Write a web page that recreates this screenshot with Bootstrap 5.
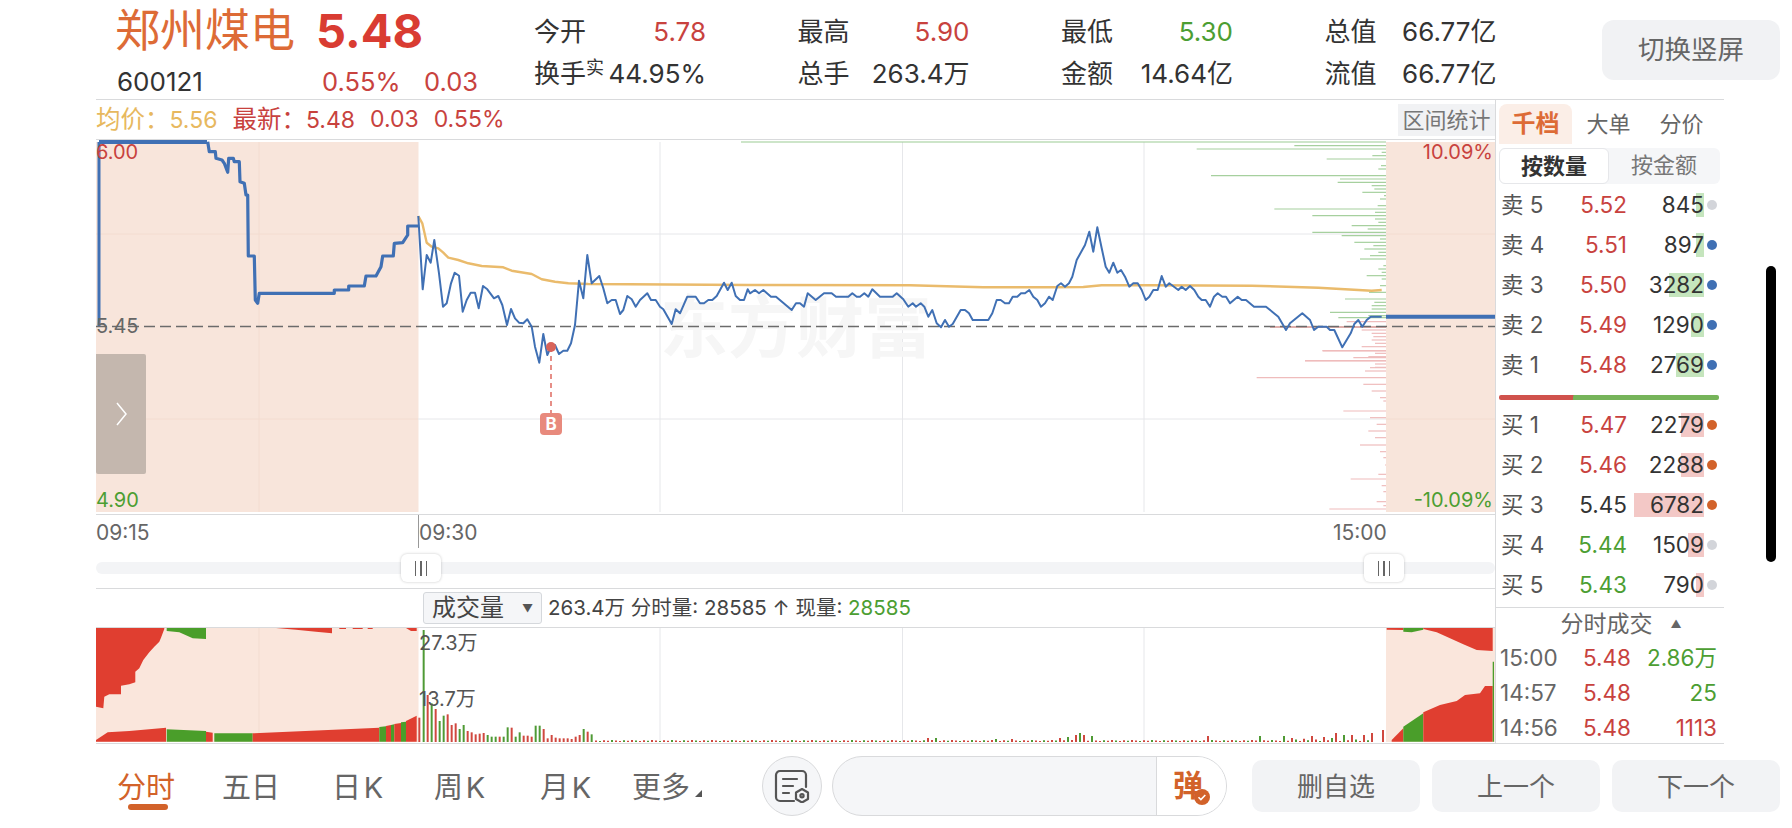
<!DOCTYPE html>
<html lang="zh-CN">
  <head>
    <meta charset="UTF-8" />
    <meta name="viewport" content="width=device-width, initial-scale=1.0" />
    <title>郑州煤电 600121</title>
    <link
      rel="stylesheet"
      href="https://cdn.jsdelivr.net/npm/bootstrap@5.3.3/dist/css/bootstrap.min.css"
    />
    <style>
      html,
      body {
        width: 1792px;
        height: 828px;
        overflow: hidden;
        background: #fff;
      }
      body {
        font-family: Inter, "Noto Sans CJK SC", sans-serif;
        color: #333;
        font-size: 22.5px;
      }
      .up { color: #c8423e; }
      .down { color: #4c9e32; }
      .muted { color: #666; }

      /* 顶部行情 */
      .top-head { height: 99px; padding-left: 115px; }
      .name-box { width: 419px; padding-top: 6px; }
      .stock-name { width: 201px; font-size: 45px; line-height: 50px; color: #dd6b36; }
      .stock-price { font-size: 47px; line-height: 50px; font-weight: 700; color: #d93c32; }
      .code-row { margin: 9px 0 0 2px; font-size: 25.5px; line-height: 34px; color: #333; }
      .code-row .code-no { width: 205px; font-size: 26px; }
      .code-row .code-pct { width: 102px; }
      .stat-grid {
        display: grid;
        grid-template-columns: repeat(4, 172px);
        column-gap: 91.5px;
        padding-top: 12px;
        font-size: 26px;
        line-height: 39px;
      }
      .stat-sup { font-size: 18px; position: relative; top: -9px; }
      .switch-btn {
        position: absolute;
        left: 1602px;
        top: 20px;
        width: 178px;
        height: 60px;
        background: #f1f2f4;
        border: 0;
        border-radius: 12px;
        color: #666;
        font-size: 26.5px;
      }

      /* 主体 */
      .main-box {
        margin-left: 96px;
        width: 1628px;
        height: 645px;
        border-top: 1px solid #d9dadc;
        border-bottom: 1px solid #d9dadc;
        overflow: hidden;
      }
      .left-col { width: 1399px; }
      .right-col { width: 229px; border-left: 1px solid #d9dadc; }
      .stat-bar { height: 40px; border-bottom: 1px solid #d9dadc; font-size: 23px; line-height: 39px; }
      .stat-items { gap: 15px; }
      .stat-items em { font-style: normal; font-size: 24.5px; }
      .avg { color: #e7b85e; }
      .range-btn {
        width: 97px;
        height: 32px;
        margin-top: 4px;
        background: #f1f2f4;
        color: #777;
        line-height: 32px;
        text-align: center;
        font-size: 22px;
      }
      .chart-svg { display: block; }
      .chart-svg text { font-family: Inter, "Noto Sans CJK SC", sans-serif; }
      .axis-box { border-top: 1px solid #d9dadc; border-bottom: 1px solid #d9dadc; height: 75px; }
      .axis-row { height: 33px; font-size: 21px; line-height: 36px; color: #666; }
      .axis-a { width: 322px; }
      .axis-b { border-left: 1px solid #999; }
      .axis-c { width: 162px; }
      .slider-track { margin-top: 14px; height: 12px; background: #f3f4f6; border-radius: 6px; }
      .slider-hand {
        position: absolute;
        top: -8px;
        width: 40px;
        height: 28px;
        background: #fff;
        border-radius: 6px;
        box-shadow: 0 0 3px rgba(0, 0, 0, 0.22);
        gap: 4px;
      }
      .slider-hand i { display: block; width: 1.5px; height: 15px; background: #666; }
      .hand-a { left: 305px; }
      .hand-b { left: 1268px; }
      .vol-head { height: 39px; border-bottom: 1px solid #d9dadc; padding-left: 327px; font-size: 20.5px; color: #444; }
      .vol-select {
        width: 119px;
        height: 32px;
        margin-right: 6px;
        padding: 0 8px;
        background: #f5f6f8;
        border: 1px solid #d5d8dc;
        border-radius: 3px;
        font-size: 24px;
        color: #444;
      }
      .vol-select b { font-size: 11px; font-weight: 400; color: #555; }

      /* 右侧盘口 */
      .tab-row { padding: 4px 0 0 3px; height: 44px; font-size: 22px; color: #666; }
      .tab-item { width: 73px; height: 40px; line-height: 40px; text-align: center; }
      .tab-on { background: #fbeee7; color: #dd6b36; font-weight: 700; font-size: 24px; border-radius: 8px 8px 0 0; }
      .seg-box { margin: 4px 0 0 3px; width: 221px; height: 36px; background: #f5f6f8; border-radius: 6px; font-size: 22px; color: #777; }
      .seg-item { width: 110px; line-height: 34px; text-align: center; }
      .seg-on { background: #fff; color: #333; font-weight: 700; border: 1px solid #e6e7ea; border-radius: 6px; }
      #sell-list { padding-top: 1px; }
      .order-row { height: 40px; line-height: 40px; }
      .o-label { width: 64px; padding-left: 5px; color: #555; white-space: pre; }
      .o-price { width: 67px; text-align: right; }
      .o-qty { width: 77px; text-align: right; color: #333; }
      .o-fill { position: absolute; right: 0; top: 8px; height: 24px; }
      .fill-sell { background: #c5e5bd; }
      .fill-buy { background: #f3c8c6; }
      .o-text { position: relative; }
      .o-dot { width: 10px; height: 10px; border-radius: 50%; margin-left: 3px; }
      .power-bar {
        margin: 10px 5px 5px 3px;
        height: 5px;
        border-radius: 2px;
        background: linear-gradient(100deg, #d0524c 33.6%, #76b45a 33.9%);
      }
      .trade-title { margin-top: 2px; border-top: 1px solid #d9dadc; height: 33px; font-size: 23px; line-height: 32px; color: #666; padding-left: 22px; }
      .trade-title b { font-size: 11px; font-weight: 400; margin-left: 18px; }
      .trade-row { height: 35px; line-height: 35px; padding-left: 4px; }
      .t-time { width: 70px; color: #666; }
      .t-price { width: 61px; text-align: right; }
      .t-vol { width: 86px; text-align: right; }

      /* 底部 */
      .foot-bar { height: 84px; padding-left: 117px; }
      .foot-tab { font-size: 29px; color: #666; height: 44px; line-height: 48px; position: relative; white-space: pre; }
      .ft-1 { width: 105px; color: #d2622a; }
      .ft-2 { width: 110px; }
      .ft-3 { width: 102px; }
      .ft-4 { width: 106px; }
      .ft-5 { width: 92px; }
      .ft-6 { width: 130px; }
      .ft-line { position: absolute; left: 11px; top: 40px; width: 40px; height: 6px; border-radius: 3px; background: #d2622a; }
      .ft-tri { position: absolute; left: 63px; top: 26px; width: 0; height: 0; border-left: 7px solid transparent; border-bottom: 7px solid #555; }
      .round-btn { width: 60px; height: 60px; margin-right: 10px; background: #f5f6f8; border: 1px solid #d9dadc; border-radius: 50%; }
      .input-pill { width: 395px; height: 60px; margin-right: 25px; background: #f5f6f8; border: 1px solid #d9dadc; border-radius: 30px; overflow: hidden; }
      .pill-send {
        position: relative;
        width: 70px;
        height: 100%;
        background: #fff;
        border-left: 1px solid #d9dadc;
        color: #d2622a;
        font-size: 30px;
        font-weight: 700;
        line-height: 56px;
        padding-left: 16px;
      }
      .send-ok { position: absolute; left: 37px; top: 32px; }
      .foot-btn {
        width: 168px;
        height: 52px;
        margin-right: 12px;
        padding: 0;
        background: #f2f3f5;
        border: 0;
        border-radius: 10px;
        color: #666;
        font-size: 26px;
      }
      .side-bar { position: fixed; left: 1766px; top: 266px; width: 10px; height: 296px; background: #000; border-radius: 5px; }
    </style>
  </head>
  <body>
    <div class="top-head d-flex position-relative">
      <div class="name-box">
        <div class="d-flex">
          <div class="stock-name">郑州煤电</div>
          <div class="stock-price">5.48</div>
        </div>
        <div class="code-row d-flex">
          <span class="code-no">600121</span>
          <span class="code-pct up">0.55%</span>
          <span class="up">0.03</span>
        </div>
      </div>
      <div class="stat-grid">
        <div class="d-flex justify-content-between"><span>今开</span><span class="up">5.78</span></div>
        <div class="d-flex justify-content-between"><span>最高</span><span class="up">5.90</span></div>
        <div class="d-flex justify-content-between"><span>最低</span><span class="down">5.30</span></div>
        <div class="d-flex justify-content-between"><span>总值</span><span>66.77亿</span></div>
        <div class="d-flex justify-content-between"><span>换手<span class="stat-sup">实</span></span><span>44.95%</span></div>
        <div class="d-flex justify-content-between"><span>总手</span><span>263.4万</span></div>
        <div class="d-flex justify-content-between"><span>金额</span><span>14.64亿</span></div>
        <div class="d-flex justify-content-between"><span>流值</span><span>66.77亿</span></div>
      </div>
      <button class="switch-btn">切换竖屏</button>
    </div>

    <div class="main-box d-flex">
      <div class="left-col">
        <div class="stat-bar d-flex justify-content-between">
          <div class="stat-items d-flex">
            <span class="avg"><em>均价：</em>5.56</span>
            <span class="up"><em>最新：</em>5.48</span>
            <span class="up">0.03</span>
            <span class="up">0.55%</span>
          </div>
          <div class="range-btn">区间统计</div>
        </div>
        <svg id="price-chart" class="chart-svg" width="1399" height="374" viewBox="96 140 1399 374"></svg>
        <div class="axis-box">
          <div class="axis-row d-flex">
            <div class="axis-a">09:15</div>
            <div class="axis-b flex-grow-1">09:30</div>
            <div class="axis-c">15:00</div>
          </div>
          <div class="slider-track position-relative">
            <div class="slider-hand hand-a d-flex justify-content-center align-items-center"><i></i><i></i><i></i></div>
            <div class="slider-hand hand-b d-flex justify-content-center align-items-center"><i></i><i></i><i></i></div>
          </div>
        </div>
        <div class="vol-head d-flex align-items-center">
          <div class="vol-select d-flex justify-content-between align-items-center"><span>成交量</span><b>▼</b></div>
          <span>263.4万 分时量: 28585 ↑ 现量: <span class="down">28585</span></span>
        </div>
        <svg id="vol-chart" class="chart-svg" width="1399" height="115" viewBox="96 628 1399 115"></svg>
      </div>

      <div class="right-col">
        <div class="tab-row d-flex">
          <div class="tab-item tab-on">千档</div>
          <div class="tab-item">大单</div>
          <div class="tab-item">分价</div>
        </div>
        <div class="seg-box d-flex">
          <div class="seg-item seg-on">按数量</div>
          <div class="seg-item">按金额</div>
        </div>
        <div id="sell-list"></div>
        <div class="power-bar"></div>
        <div id="buy-list"></div>
        <div class="trade-title d-flex justify-content-center align-items-center">
          <span>分时成交</span><b>▲</b>
        </div>
        <div id="trade-list"></div>
      </div>
    </div>

    <div class="foot-bar d-flex align-items-center">
      <div class="foot-tab ft-1">分时<span class="ft-line"></span></div>
      <div class="foot-tab ft-2">五日</div>
      <div class="foot-tab ft-3">日&#8202;K</div>
      <div class="foot-tab ft-4">周&#8202;K</div>
      <div class="foot-tab ft-5">月&#8202;K</div>
      <div class="foot-tab ft-6">更多<span class="ft-tri"></span></div>
      <div class="round-btn d-flex align-items-center justify-content-center flex-shrink-0">
        <svg width="36" height="34" viewBox="0 0 36 34" fill="none" stroke="#555" stroke-width="2.2" stroke-linecap="round" stroke-linejoin="round">
          <path d="M20 32H6a4 4 0 0 1-4-4V6a4 4 0 0 1 4-4h22a4 4 0 0 1 4 4v12" />
          <path d="M9 10h14M9 17h10M9 24h6" />
          <path d="M28 20l6 3.5v6.5l-6 3.5-6-3.5v-6.5z" />
          <circle cx="28" cy="26.8" r="1.6" />
        </svg>
      </div>
      <div class="input-pill d-flex justify-content-end flex-shrink-0">
        <div class="pill-send">
          弹
          <svg class="send-ok" width="16" height="16" viewBox="0 0 16 16">
            <circle cx="8" cy="8" r="8" fill="#d2622a" />
            <path d="M4.5 8.2l2.4 2.4 4.4-4.6" fill="none" stroke="#fff" stroke-width="1.6" />
          </svg>
        </div>
      </div>
      <button class="btn foot-btn flex-shrink-0">删自选</button>
      <button class="btn foot-btn flex-shrink-0">上一个</button>
      <button class="btn foot-btn flex-shrink-0">下一个</button>
    </div>

    <div class="side-bar"></div>

    <script>
      // 把放大图上读到的坐标换回页面坐标
      const at = (ox, oy, pts) => pts.map(([x, y]) => [ox + x / 3, oy + y / 3]);
      const str = (pts) => pts.map(([x, y]) => x.toFixed(1) + "," + y.toFixed(1)).join(" ");
      const poly = (pts, color) => `<polygon points="${str(pts)}" fill="${color}" />`;
      const line = (x1, y1, x2, y2, color, w, extra = "") =>
        `<line x1="${x1}" y1="${y1}" x2="${x2}" y2="${y2}" stroke="${color}" stroke-width="${w}" ${extra} />`;
      const path = (pts, color, w) =>
        `<polyline points="${str(pts)}" fill="none" stroke="${color}" stroke-width="${w}" stroke-linejoin="round" />`;
      const label = (x, y, text, color, anchor = "start") =>
        `<text x="${x}" y="${y}" font-size="20" fill="${color}" text-anchor="${anchor}">${text}</text>`;

      const BLUE = "#4070b4";
      const SHADE = "#f8e5db";
      const SHADE_VOL = "#fae6dc";
      const GRID = "#e6e7ea";

      // 盘前集合竞价
      const preLine = at(96, 140, [
        [335, 5], [340, 35], [358, 35], [360, 55], [378, 60], [385, 70], [395, 97], [398, 55], [412, 55],
        [415, 65], [430, 65], [432, 125], [445, 130], [450, 165], [455, 165], [457, 348], [475, 348],
        [478, 480], [485, 490], [490, 460], [715, 460], [715, 450], [758, 450], [758, 438], [805, 438],
        [810, 408], [840, 408], [855, 380], [860, 348], [892, 348], [895, 310], [920, 308], [935, 285],
        [935, 258], [968, 258],
      ]);

      // 分时线
      const dayLine = [
        ...at(415, 210, [
          [10, 18], [23, 238], [35, 135], [47, 158], [58, 90], [72, 190], [84, 290], [95, 280], [108, 220],
          [119, 188], [132, 197], [143, 305], [155, 270], [167, 248], [180, 248], [191, 295], [204, 228],
          [217, 238], [237, 265], [250, 258], [262, 285], [276, 345], [288, 297], [300, 325], [312, 338],
          [325, 340], [337, 328], [350, 350], [360, 410], [373, 458], [385, 372], [397, 435], [408, 410],
          [420, 405], [432, 432], [445, 422], [457, 422], [468, 400], [480, 345], [492, 212], [505, 265],
          [517, 135], [530, 220], [553, 198], [565, 235], [577, 280], [590, 270], [602, 270], [615, 312],
          [625, 300], [637, 258], [650, 268], [662, 290], [675, 270], [697, 250], [708, 270], [722, 270],
          [735, 290], [745, 298], [770, 342], [782, 298], [795, 310], [817, 260], [842, 260], [855, 280],
          [867, 280], [880, 270], [892, 270], [905, 258], [927, 218], [938, 240], [950, 218], [962, 258],
          [975, 270], [987, 270], [998, 238],
        ]),
        ...at(750, 210, [
          [0, 250], [15, 240], [27, 250], [40, 240], [63, 260], [78, 260], [125, 300], [138, 280], [150, 280],
          [162, 290], [173, 250], [197, 270], [222, 250], [245, 250], [258, 260], [295, 260], [307, 250],
          [320, 260], [330, 260], [343, 250], [355, 260], [367, 238], [390, 260], [428, 260], [440, 250],
          [460, 268], [475, 290], [488, 280], [498, 290], [512, 280], [523, 290], [535, 320], [547, 300],
          [560, 340], [573, 352], [585, 330], [597, 350], [608, 342], [632, 300], [645, 300], [657, 310],
          [668, 330], [715, 330], [727, 310], [740, 270], [752, 270], [765, 280], [777, 280], [788, 260],
          [802, 260], [813, 250], [825, 250], [838, 240], [850, 260], [862, 270], [873, 290], [885, 280],
          [897, 260], [908, 270], [922, 228], [933, 220], [945, 230], [957, 220], [967, 200], [980, 150],
          [1005, 105],
        ]),
        ...at(1085, 140, [
          [13, 275], [25, 335], [37, 262], [50, 325], [62, 380], [73, 398], [85, 368], [97, 398], [108, 390],
          [120, 410], [133, 440], [145, 430], [158, 430], [170, 450], [182, 480], [193, 470], [205, 450],
          [218, 450], [230, 408], [242, 440], [253, 430], [280, 450], [290, 440], [302, 450], [315, 438],
          [328, 450], [340, 470], [350, 480], [362, 480], [375, 500], [387, 470], [398, 460], [412, 470],
          [423, 470], [435, 490], [458, 470], [470, 480], [483, 480], [507, 500], [543, 500], [580, 530],
          [603, 570], [615, 550], [652, 520], [675, 540], [687, 570], [700, 560], [725, 560], [735, 570],
          [748, 570], [772, 622], [797, 580], [808, 552], [820, 540], [832, 560], [845, 540], [857, 530],
          [890, 530],
        ]),
      ];

      // 均价线
      const avgLine = [
        ...at(415, 210, [
          [10, 18], [22, 40], [35, 98], [50, 110], [70, 115], [85, 128], [100, 143], [130, 150], [160, 160],
          [200, 168], [265, 172], [290, 182], [350, 192], [380, 208], [420, 215], [460, 220], [520, 222], [1000, 225],
        ]),
        ...at(750, 210, [[480, 226], [700, 232], [900, 232], [1000, 231]]),
        ...at(1085, 140, [[50, 436], [200, 436], [500, 437], [700, 443], [860, 452], [890, 450]]),
      ];

      // 右侧成交分布: [y, 左端 x]
      const greenBars = [
        [17, 628], [27, 335], [37, 890], [47, 862], [57, 725], [77, 888], [87, 880], [107, 378], [117, 765],
        [127, 758], [137, 860], [147, 868], [157, 832], [167, 897], [177, 885], [197, 878], [207, 568],
        [217, 870], [227, 682], [237, 870], [247, 880], [257, 800], [267, 848], [277, 682], [287, 770],
        [297, 885], [307, 808], [317, 865], [327, 838], [337, 880], [347, 855], [357, 825], [377, 895],
        [387, 880], [397, 890], [407, 845], [417, 890], [437, 885], [457, 852], [477, 780], [487, 868],
        [497, 860], [507, 860], [517, 735], [527, 850], [533, 760],
      ];
      const redTop = [
        [545, 785], [570, 830], [580, 860], [590, 865], [600, 860], [610, 870], [620, 830], [632, 712],
        [640, 870], [650, 850], [662, 660], [672, 870], [682, 870],
      ];
      const redLow = [
        [378, 98], [398, 190], [408, 45], [428, 240], [438, 225], [458, -100], [478, 220], [498, 245],
        [518, 270], [528, 280], [558, 160], [578, 240], [598, 260], [618, 235], [638, 255], [660, 210],
        [680, 270], [698, 280], [720, 285], [748, 265], [762, 182], [782, 275], [800, 280], [830, 260],
        [842, 280], [852, 118],
      ];

      let price = "";
      price += `<rect x="96" y="142" width="322.5" height="370" fill="${SHADE}" />`;
      price += `<rect x="1386" y="142" width="109" height="370" fill="${SHADE}" />`;
      [660, 902.5, 1144].forEach((x) => (price += line(x, 142, x, 512, GRID, 1)));
      price += line(259, 142, 259, 512, "#f3dcd0", 1);
      [234, 419].forEach((y) => {
        price += line(418, y, 1386, y, GRID, 1);
        price += line(96, y, 418, y, "#f3dcd0", 1);
        price += line(1386, y, 1495, y, "#f3dcd0", 1);
      });
      price += `<text x="660" y="352" font-size="68" font-weight="700" fill="#f6f6f6">东方财富</text>`;
      price += line(741, 142, 1386, 142, "#9ccc94", 1.2);
      greenBars.forEach(([y, x]) => (price += line(1085 + x / 3, 140 + y / 3, 1386, 140 + y / 3, "#a6d09e", 1.2)));
      redTop.forEach(([y, x]) => (price += line(1085 + x / 3, 140 + y / 3, 1386, 140 + y / 3, "#efbcbc", 1.2)));
      redLow.forEach(([y, x]) => (price += line(1290 + x / 3, 225 + y / 3, 1386, 225 + y / 3, "#efbcbc", 1.2)));
      price += line(1270, 327, 1386, 327, "#c0605a", 1.2);
      price += line(96, 326.5, 1495, 326.5, "#6b6b6b", 1.4, 'stroke-dasharray="11 5"');
      price += path(avgLine, "#eabb6c", 2.4);
      price += line(99, 142, 99, 326, BLUE, 3);
      price += line(99, 142, 207, 142, BLUE, 4);
      price += path(preLine, BLUE, 3.2);
      price += path(dayLine, BLUE, 2);
      price += line(1386, 316.7, 1495, 316.7, BLUE, 4);
      // B 点买入标记
      price += line(551, 347, 551, 413, "#e0736a", 1.6, 'stroke-dasharray="5 4"');
      price += `<circle cx="551" cy="347" r="5" fill="#d9645a" />`;
      price += `<rect x="540" y="413" width="22" height="22" rx="4" fill="#e88a7d" />`;
      price += `<text x="551" y="430" font-size="17" font-weight="700" fill="#fff" text-anchor="middle">B</text>`;
      // 左侧收起把手
      price += `<path d="M96 354h48a2 2 0 0 1 2 2v116a2 2 0 0 1-2 2H98a2 2 0 0 1-2-2z" fill="#c4b7ae" />`;
      price += `<path d="M117 403l9 11-9 11" fill="none" stroke="#fff" stroke-width="1.5" />`;
      // 坐标文字
      price += label(96, 159, "6.00", "#c8423e");
      price += label(96, 333, "5.45", "#666");
      price += label(96, 507, "4.90", "#4c9e32");
      price += label(1493, 159, "10.09%", "#c8423e", "end");
      price += label(1493, 507, "-10.09%", "#4c9e32", "end");
      document.getElementById("price-chart").innerHTML = price;

      // 成交量图
      const RED = "#e03e30";
      const GREEN = "#4a9e2a";
      let vol = "";
      vol += `<rect x="96" y="628" width="322.5" height="114" fill="${SHADE_VOL}" />`;
      vol += `<rect x="1386" y="628" width="109" height="114" fill="${SHADE_VOL}" />`;
      [660, 902.5, 1144].forEach((x) => (vol += line(x, 628, x, 742, GRID, 1)));
      vol += line(259, 628, 259, 742, "#f3dcd0", 1);

      const preShapes = [
        [RED, [[0, 9], [0, 245], [22, 250], [25, 215], [40, 208], [75, 208], [75, 182], [100, 178], [118, 172], [118, 140], [130, 130], [142, 105], [160, 82], [175, 65], [190, 50], [195, 38], [205, 12], [205, 9]]],
        [GREEN, [[212, 9], [212, 18], [250, 22], [290, 40], [330, 42], [330, 9]]],
        [RED, [[540, 9], [600, 14], [660, 20], [708, 25], [708, 9]]],
        [RED, [[730, 9], [730, 12], [750, 12], [750, 9]]],
        [RED, [[770, 9], [770, 12], [800, 12], [800, 9]]],
        [RED, [[815, 9], [815, 12], [830, 12], [830, 9]]],
        [RED, [[930, 9], [945, 18], [962, 18], [962, 9]]],
        [RED, [[0, 350], [0, 345], [35, 322], [100, 318], [210, 308], [210, 350]]],
        [GREEN, [[212, 350], [212, 313], [330, 318], [330, 350]]],
        [RED, [[330, 350], [330, 320], [350, 323], [350, 350]]],
        [GREEN, [[355, 350], [355, 325], [470, 325], [470, 350]]],
        [RED, [[470, 350], [470, 325], [850, 308], [850, 350]]],
        [GREEN, [[850, 350], [850, 306], [870, 304], [870, 350]]],
        [RED, [[870, 350], [870, 303], [885, 300], [885, 350]]],
        [GREEN, [[885, 350], [885, 300], [895, 298], [895, 350]]],
        [RED, [[895, 350], [895, 297], [915, 294], [915, 350]]],
        [GREEN, [[915, 350], [915, 292], [930, 290], [930, 350]]],
        [RED, [[930, 350], [930, 288], [962, 272], [962, 350]]],
      ];
      preShapes.forEach(([c, pts]) => (vol += poly(at(96, 625, pts), c)));

      const postShapes = [
        [RED, [[290, 1208], [290, 1214], [340, 1215], [340, 1208]]],
        [GREEN, [[340, 1208], [340, 1220], [365, 1222], [400, 1214], [400, 1208]]],
        [RED, [[400, 1208], [400, 1212], [440, 1222], [480, 1240], [520, 1258], [560, 1275], [608, 1278], [608, 1208]]],
        [RED, [[305, 1550], [305, 1545], [340, 1510], [340, 1550]]],
        [GREEN, [[340, 1550], [340, 1505], [400, 1465], [400, 1550]]],
        [RED, [[400, 1550], [400, 1462], [450, 1440], [500, 1428], [525, 1410], [570, 1405], [585, 1383], [608, 1383], [608, 1550]]],
        [GREEN, [[608, 1550], [608, 1310], [612, 1310], [612, 1550]]],
      ];
      postShapes.forEach(([c, pts]) => (vol += poly(at(1290, 225, pts), c)));

      // 开盘后的柱子: [x, 顶, 颜色]
      const openBars = [
        [970, 278, 0], [983, 15, 1], [995, 210, 0], [1007, 235, 1], [1019, 252, 0], [1031, 288, 1], [1043, 272, 1],
        [1055, 268, 0], [1067, 300, 0], [1079, 295, 0], [1091, 312, 1], [1103, 300, 1], [1115, 318, 0], [1127, 322, 0],
        [1139, 328, 0], [1151, 326, 0], [1163, 324, 0], [1175, 330, 1], [1187, 335, 1], [1199, 335, 1], [1211, 335, 0],
        [1223, 335, 1], [1235, 307, 1], [1247, 308, 0], [1259, 335, 1], [1271, 322, 1], [1283, 332, 0], [1295, 332, 0],
        [1307, 335, 0], [1319, 302, 1], [1331, 302, 1], [1343, 312, 0], [1355, 340, 0], [1367, 330, 0], [1379, 338, 0],
        [1391, 340, 0], [1403, 340, 0], [1415, 340, 0], [1427, 342, 0], [1439, 335, 0], [1451, 330, 0], [1463, 312, 1],
        [1475, 320, 0], [1487, 328, 1],
      ];
      openBars.forEach(([x, top, g]) => {
        const px = 96 + x / 3;
        vol += line(px, 625 + top / 3, px, 742, g ? "#4f9a35" : "#d0483f", 2);
      });

      const spikes = {
        928: 4, 936: 4, 996: 3, 1012: 3, 1060: 4, 1068: 5, 1076: 7, 1080: 9, 1084: 7, 1092: 6,
        1208: 6, 1260: 6, 1284: 6, 1312: 6, 1324: 5, 1336: 9, 1344: 7, 1352: 7, 1364: 7, 1372: 9,
      };
      for (let x = 596; x < 1376; x += 4) {
        const h = spikes[x] || 1 + (((x * 7) % 5) / 4) * (x > 1290 ? 3 : 1);
        vol += line(x, 742 - h, x, 742, x % 12 === 0 ? "#4f9a35" : "#d0483f", 2);
      }
      vol += line(1383, 730, 1383, 742, "#d0483f", 2);

      vol += label(419, 650, "27.3万", "#555");
      vol += label(419, 706, "13.7万", "#555");
      document.getElementById("vol-chart").innerHTML = vol;

      // 五档盘口
      const sells = [
        { name: "卖 5", price: "5.52", qty: 845, w: 8, dot: "#d3d5da", cls: "up" },
        { name: "卖 4", price: "5.51", qty: 897, w: 8, dot: "#4070b4", cls: "up" },
        { name: "卖 3", price: "5.50", qty: 3282, w: 35, dot: "#4070b4", cls: "up" },
        { name: "卖 2", price: "5.49", qty: 1290, w: 13, dot: "#4070b4", cls: "up" },
        { name: "卖 1", price: "5.48", qty: 2769, w: 28, dot: "#4070b4", cls: "up" },
      ];
      const buys = [
        { name: "买 1", price: "5.47", qty: 2279, w: 23, dot: "#d2622a", cls: "up" },
        { name: "买 2", price: "5.46", qty: 2288, w: 23, dot: "#d2622a", cls: "up" },
        { name: "买 3", price: "5.45", qty: 6782, w: 70, dot: "#d2622a", cls: "" },
        { name: "买 4", price: "5.44", qty: 1509, w: 16, dot: "#d3d5da", cls: "down" },
        { name: "买 5", price: "5.43", qty: 790, w: 8, dot: "#d3d5da", cls: "down" },
      ];
      function renderOrders(id, list, fill) {
        document.getElementById(id).innerHTML = list
          .map(
            (o) => `
            <div class="order-row d-flex align-items-center">
              <div class="o-label">${o.name}</div>
              <div class="o-price ${o.cls}">${o.price}</div>
              <div class="o-qty position-relative">
                <span class="o-fill ${fill}" style="width:${o.w}px"></span>
                <span class="o-text">${o.qty}</span>
              </div>
              <div class="o-dot" style="background:${o.dot}"></div>
            </div>`
          )
          .join("");
      }
      renderOrders("sell-list", sells, "fill-sell");
      renderOrders("buy-list", buys, "fill-buy");

      // 分时成交
      const trades = [
        { time: "15:00", price: "5.48", vol: "2.86万", cls: "down" },
        { time: "14:57", price: "5.48", vol: "25", cls: "down" },
        { time: "14:56", price: "5.48", vol: "1113", cls: "up" },
      ];
      document.getElementById("trade-list").innerHTML = trades
        .map(
          (t) => `
          <div class="trade-row d-flex">
            <div class="t-time">${t.time}</div>
            <div class="t-price up">${t.price}</div>
            <div class="t-vol ${t.cls}">${t.vol}</div>
          </div>`
        )
        .join("");
    </script>
    <script src="https://cdn.jsdelivr.net/npm/bootstrap@5.3.3/dist/js/bootstrap.bundle.min.js"></script>
  </body>
</html>
